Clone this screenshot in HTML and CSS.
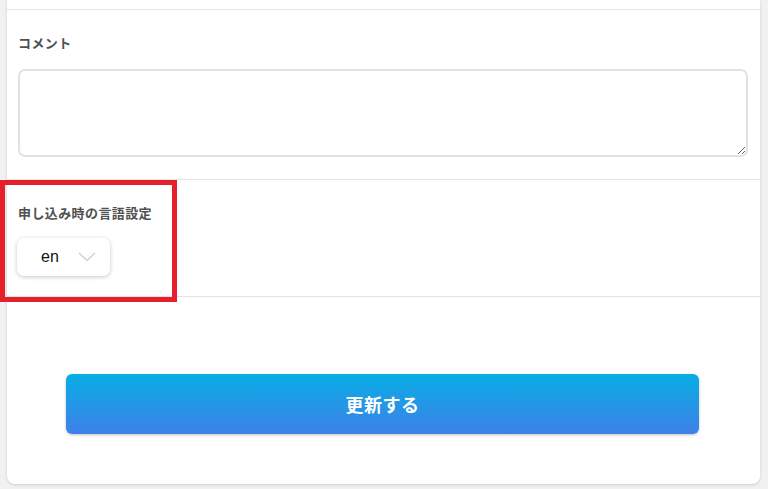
FILE: index.html
```html
<!doctype html>
<html lang="ja">
    <head>
        <meta charset="UTF-8" />
        <meta name="viewport" content="width=device-width, initial-scale=1.0" />
        <title>設定</title>
        <link rel="stylesheet" href="styles.css">
    </head>
    <body>
        <div class="card">
            <div class="field-stub"></div>
            <div class="field">
                <div class="field-label">コメント</div>
                <textarea class="comment-box"></textarea>
            </div>
            <div class="field field-lang">
                <div class="field-label">申し込み時の言語設定</div>
                <div class="lang-select">
                    <span>en</span>
                    <svg width="18" height="10" viewBox="0 0 18 10">
                        <path d="M1 1 L9 8.5 L17 1" fill="none" stroke="#c3c7cf" stroke-width="1.1" />
                    </svg>
                </div>
            </div>
            <div class="actions">
                <button class="submit-btn">更新する</button>
            </div>
        </div>
        <div class="highlight"></div>
    </body>
</html>
```

FILE: styles.css
```css
body {
    margin: 0;
    background-color: #f1f1f1;
    font-family: "Liberation Sans", "Noto Sans CJK JP", sans-serif;
}

.card {
    margin: 0 8px 5px 7px;
    background-color: #fff;
    border-radius: 0 0 8px 8px;
    box-shadow: 0 1px 3px rgba(0, 0, 0, 0.15);
}

.field-stub {
    height: 9px;
    border-bottom: 1px solid #e4e4e4;
}

.field {
    padding: 25px 12px 22px 11px;
    border-bottom: 1px solid #e4e4e4;
}

.field-lang {
    padding-top: 25px;
    padding-bottom: 20px;
}

.field-label {
    font-family: "Noto Sans CJK JP", sans-serif;
    font-size: 13px;
    font-weight: bold;
    letter-spacing: 0.4px;
    line-height: 16px;
    color: #505050;
    margin-bottom: 18px;
}

.field-lang .field-label {
    margin-bottom: 17px;
}

.comment-box {
    display: block;
    box-sizing: border-box;
    width: 100%;
    height: 88px;
    margin: 0;
    border: 2px solid #e2e2e2;
    border-radius: 7px;
    resize: vertical;
    outline: none;
}

.lang-select {
    display: flex;
    align-items: center;
    box-sizing: border-box;
    width: 93px;
    height: 38px;
    margin-left: -1px;
    padding: 0 0 0 24px;
    gap: 19px;
    background-color: #fff;
    border-radius: 7px;
    box-shadow: 0 1px 4px rgba(0, 0, 0, 0.22);
    font-size: 16px;
    color: #111;
}

.lang-select svg {
    margin-top: -1px;
}

.actions {
    padding: 77px 61px 50px 59px;
}

.submit-btn {
    display: block;
    width: 100%;
    height: 60px;
    border: none;
    border-radius: 6px;
    background: linear-gradient(to bottom, #07aee5, #3f80e8);
    box-shadow: 0 1px 3px rgba(0, 0, 0, 0.25);
    color: #fff;
    font-family: "Noto Sans CJK JP", sans-serif;
    font-size: 18px;
    font-weight: bold;
    letter-spacing: 0.5px;
}

.highlight {
    position: absolute;
    left: 0;
    top: 180px;
    width: 167px;
    height: 112px;
    border: 5px solid #e6202a;
}
```
